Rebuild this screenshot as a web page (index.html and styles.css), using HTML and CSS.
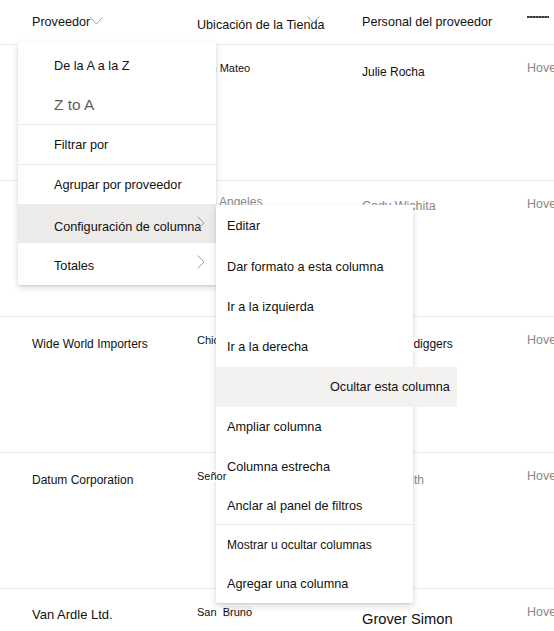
FILE: index.html
```html
<!DOCTYPE html>
<html lang="es">
<head>
<meta charset="utf-8">
<link rel="stylesheet" href="styles.css">
</head>
<body>
<div class="grid">
  <div class="row head">
    <div class="cell c1 hc"><span>Proveedor</span><svg class="chev-down" width="13" height="8" viewBox="0 0 13 8"><path d="M0.5 0.5 L6.5 7 L12.5 0.5" fill="none" stroke="#a19f9d" stroke-width="1"/></svg></div>
    <div class="cell c2 hc2"><span>Ubicación de la Tienda</span><svg class="chev-over" width="13" height="8" viewBox="0 0 13 8"><path d="M0.5 0.5 L6.5 7 L12.5 0.5" fill="none" stroke="#a19f9d" stroke-width="1"/></svg></div>
    <div class="cell c3 hc">Personal del proveedor</div>
    <div class="cell c4 hc4"><span class="tiny"></span></div>
  </div>
  <div class="row">
    <div class="cell c1">Fabrikam</div>
    <div class="cell c2">San Mateo</div>
    <div class="cell c3">Julie Rocha</div>
    <div class="cell c4">Hover</div>
  </div>
  <div class="row r2">
    <div class="cell c1">Contoso</div>
    <div class="cell c2">Los Angeles</div>
    <div class="cell c3">Cody Wichita</div>
    <div class="cell c4">Hover</div>
  </div>
  <div class="row">
    <div class="cell c1">Wide World Importers</div>
    <div class="cell c2">Chicago</div>
    <div class="cell c3">Contoso &nbsp;<span class="over">diggers</span></div>
    <div class="cell c4">Hover</div>
  </div>
  <div class="row">
    <div class="cell c1">Datum Corporation</div>
    <div class="cell c2 visible"><span class="over">Señor</span></div>
    <div class="cell c3 grey">Sara Smiith</div>
    <div class="cell c4">Hover</div>
  </div>
  <div class="row last">
    <div class="cell c1 big">Van Ardle Ltd.</div>
    <div class="cell c2">San&nbsp; <span class="hl">Bruno</span></div>
    <div class="cell c3 bigger">Grover Simon</div>
    <div class="cell c4">Hover</div>
  </div>
</div>

<div class="menu main-menu">
  <div class="item">De la A a la Z</div>
  <div class="item dim">Z to A</div>
  <div class="divider"></div>
  <div class="item">Filtrar por</div>
  <div class="divider"></div>
  <div class="item">Agrupar por proveedor</div>
  <div class="item active low">Configuración de columna<svg class="chev-right" width="8" height="14" viewBox="0 0 8 14"><path d="M0.5 0.5 L7 7 L0.5 13.5" fill="none" stroke="#a19f9d" stroke-width="1"/></svg></div>
  <div class="item low">Totales<svg class="chev-right" width="8" height="14" viewBox="0 0 8 14"><path d="M0.5 0.5 L7 7 L0.5 13.5" fill="none" stroke="#a19f9d" stroke-width="1"/></svg></div>
</div>

<div class="menu sub-menu">
  <div class="item first">Editar</div>
  <div class="item">Dar formato a esta columna</div>
  <div class="item">Ir a la izquierda</div>
  <div class="item">Ir a la derecha</div>
  <div class="item hover">Ocultar esta columna</div>
  <div class="item">Ampliar columna</div>
  <div class="item">Columna estrecha</div>
  <div class="item short">Anclar al panel de filtros</div>
  <div class="divider"></div>
  <div class="item small">Mostrar u ocultar columnas</div>
  <div class="item lastitem">Agregar una columna</div>
</div>
</body>
</html>
```

FILE: styles.css
```css
html, body {
  margin: 0;
  padding: 0;
  background: #ffffff;
}
body {
  width: 554px;
  height: 631px;
  overflow: hidden;
  position: relative;
  font-family: "Liberation Sans", Arial, sans-serif;
  color: #111111;
}
.grid {
  display: flex;
  flex-direction: column;
}
.row {
  display: grid;
  grid-template-columns: 165px 165px 165px 1fr;
  padding-left: 32px;
  height: 135px;
  border-bottom: 1px solid #edebe9;
  white-space: nowrap;
}
.row.head {
  height: 44px;
}
.row.last {
  border-bottom: none;
}
.cell {
  overflow: hidden;
  white-space: nowrap;
}
.cell.visible {
  overflow: visible;
}
.over {
  position: relative;
  z-index: 5;
  background: #ffffff;
}
.c1, .c3 {
  font-size: 12px;
  line-height: 16px;
  padding-top: 19px;
}
.c2 {
  font-size: 11px;
  line-height: 14px;
  padding-top: 16px;
}
.c4 {
  font-size: 12.5px;
  line-height: 16px;
  padding-top: 15px;
  color: #8a8886;
}
.c1.big {
  font-size: 13px;
  padding-top: 18px;
}
.c3.bigger {
  font-size: 14.7px;
  line-height: 18px;
  padding-top: 21px;
}
.c3.grey {
  color: #8a8886;
}
.r2 .c2 {
  color: #8a8886;
  font-size: 12px;
  padding-top: 14px;
}
.r2 .c3 {
  color: #8a8886;
  font-size: 12.5px;
  padding-top: 17px;
}
.hl {
  background: #f6f6f6;
}
.head .cell {
  font-size: 12.6px;
  line-height: 16px;
  color: #111111;
}
.hc {
  padding-top: 14px;
}
.hc2 {
  padding-top: 17px;
  position: relative;
}
.hc4 {
  padding-top: 16px;
}
.chev-down {
  display: inline-block;
  vertical-align: top;
  margin-top: 3px;
}
.chev-over {
  position: absolute;
  left: 110px;
  top: 16px;
}
.tiny {
  display: block;
  width: 22px;
  height: 2px;
  background: repeating-linear-gradient(90deg, #3b3a39 0 2px, #6b6a69 2px 3px);
}
.menu {
  position: absolute;
  background: #ffffff;
  box-shadow: 0 3.2px 7.2px rgba(0, 0, 0, 0.13), 0 0.6px 1.8px rgba(0, 0, 0, 0.11);
  font-size: 12.7px;
  color: #111111;
}
.main-menu {
  left: 18px;
  top: 43px;
  width: 198px;
  padding: 3px 0;
}
.main-menu .item {
  height: 39px;
  padding-left: 36px;
}
.item {
  display: flex;
  align-items: center;
  position: relative;
  white-space: nowrap;
  box-sizing: border-box;
}
.main-menu .item.low {
  padding-top: 7px;
}
.item.dim {
  color: #605e5c;
  font-size: 15.4px;
}
.item.active {
  background: #edebe9;
}
.chev-right {
  position: absolute;
  right: 11px;
  top: 12px;
}
.divider {
  height: 1px;
  background: #edebe9;
}
.sub-menu {
  left: 216px;
  top: 205px;
  width: 197px;
}
.sub-menu .item {
  height: 40px;
  padding-left: 11px;
}
.sub-menu .item.first {
  height: 42px;
}
.sub-menu .item.hover {
  background: #f3f2f1;
  margin-right: -44px;
  padding-left: 114px;
}
.sub-menu .item.short {
  height: 37px;
}
.sub-menu .item.small {
  font-size: 12px;
}
.sub-menu .item.lastitem {
  height: 38px;
}
```
